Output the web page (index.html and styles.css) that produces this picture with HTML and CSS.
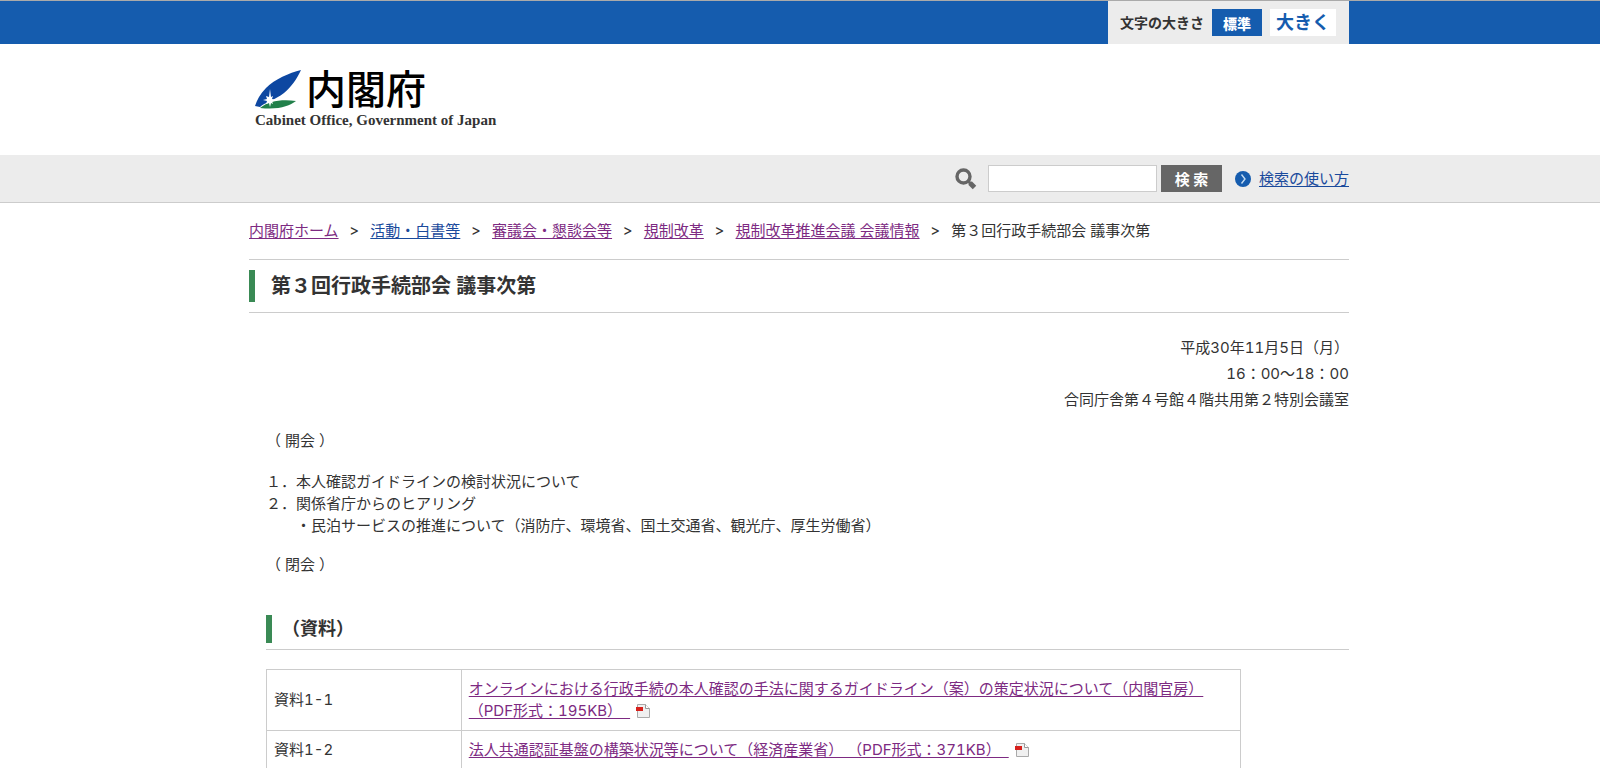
FILE: index.html
```
<!DOCTYPE html>
<html lang="ja">
<head>
<meta charset="utf-8">
<title>第３回行政手続部会 議事次第 - 内閣府</title>
<link rel="stylesheet" href="styles.css">
</head>
<body>
<div class="topbar">
  <div class="inner topbar-inner">
    <div class="fontsize">
      <span class="fontsize-label">文字の大きさ</span>
      <button type="button" class="size-btn size-standard">標準</button>
      <button type="button" class="size-btn size-large">大きく</button>
    </div>
  </div>
</div>

<header class="header">
  <div class="inner">
    <a class="logo" href="#">
      <span class="logo-main">
        <svg class="logo-mark" width="46" height="40" viewBox="0 0 46 40" aria-hidden="true">
          <path d="M46 0C34 3 20 9 11 18 5 24 2 30 0 36l5 1C9 33 20 30 29 23 36 17 42 9 46 0Z" fill="#0d47a1"/>
          <path d="M5 38C13 31 27 29 41 31 34 36 24 40 5 38Z" fill="#22804a"/>
          <path d="M15 19l1 8 2-1-1 3 5 1-5 1 1 3-2-1-1 4-1-4-3 1 1-3-4-1 4-1-1-3 3 1Z" fill="#fff"/>
        </svg>
        <span class="logo-ja">内閣府</span>
      </span>
      <span class="logo-en">Cabinet Office, Government of Japan</span>
    </a>
  </div>
</header>

<div class="searchbar">
  <form class="inner search">
    <label class="search-label" for="q" aria-label="検索">
      <svg width="22" height="22" viewBox="0 0 22 22" aria-hidden="true">
        <circle cx="8.500" cy="8.500" r="6.500" fill="none" stroke="#666" stroke-width="3.400"/>
        <path d="M13 13l2.500 2.500" stroke="#666" stroke-width="3"/>
        <path d="M15 15l4.500 4.500" stroke="#666" stroke-width="5"/>
      </svg>
    </label>
    <input class="search-input" id="q" type="text">
    <button class="search-btn" type="button">検 索</button>
    <svg class="search-arrow" width="16" height="16" viewBox="0 0 16 16" aria-hidden="true">
      <circle cx="8" cy="8" r="8" fill="#155cae"/>
      <path d="M6.500 3.500l3.500 4.500-3.500 4.500" fill="none" stroke="#c4dcf2" stroke-width="1.400"/>
    </svg>
    <a class="link-new" href="#">検索の使い方</a>
  </form>
</div>

<main class="inner">
  <nav class="crumbs" aria-label="パンくずリスト">
    <a href="#">内閣府ホーム</a><span>&gt;</span>
    <a class="link-new" href="#">活動・白書等</a><span>&gt;</span>
    <a href="#">審議会・懇談会等</a><span>&gt;</span>
    <a href="#">規制改革</a><span>&gt;</span>
    <a href="#">規制改革推進会議 会議情報</a><span>&gt;</span>
    <b>第３回行政手続部会 議事次第</b>
  </nav>

  <div class="title-box"><h1 class="title">第３回行政手続部会 議事次第</h1></div>

  <div class="meeting">
    <p>平成30年11月5日（月）</p>
    <p>16：00～18：00</p>
    <p>合同庁舎第４号館４階共用第２特別会議室</p>
  </div>

  <div class="body">
    <p class="session">（ 開会 ）</p>
    <div class="agenda">
      <p>１．本人確認ガイドラインの検討状況について</p>
      <p>２．関係省庁からのヒアリング</p>
      <p class="agenda-sub">・民泊サービスの推進について（消防庁、環境省、国土交通省、観光庁、厚生労働省）</p>
    </div>
    <p class="session">（ 閉会 ）</p>

    <div class="section-head"><h2 class="section-title">（資料）</h2></div>

    <table class="docs">
      <tr>
        <td class="docs-no">資料1-1</td>
        <td><a href="#">オンラインにおける行政手続の本人確認の手法に関するガイドライン（案）の策定状況について（内閣官房）<br>（PDF形式：195KB）&nbsp;&nbsp;</a>
          <svg class="pdf" width="14" height="14" viewBox="0 0 14 14" aria-hidden="true"><path d="M1.500.5h8l4 4v9h-12Z" fill="#f0f0f0" stroke="#aaa"/><path d="M9.500.5v4h4" fill="#fff" stroke="#999"/><path d="M0 3h7v4H0Z" fill="#d8201c"/></svg></td>
      </tr>
      <tr>
        <td class="docs-no">資料1-2</td>
        <td><a href="#">法人共通認証基盤の構築状況等について（経済産業省） （PDF形式：371KB）&nbsp;&nbsp;</a>
          <svg class="pdf" width="14" height="14" viewBox="0 0 14 14" aria-hidden="true"><path d="M1.500.5h8l4 4v9h-12Z" fill="#f0f0f0" stroke="#aaa"/><path d="M9.500.5v4h4" fill="#fff" stroke="#999"/><path d="M0 3h7v4H0Z" fill="#d8201c"/></svg></td>
      </tr>
    </table>
  </div>
</main>
</body>
</html>
```
FILE: styles.css
```
* { box-sizing: border-box; }
body {
  margin: 0;
  background: #fff;
  color: #333;
  font: 15px/22px Inter, "Noto Sans CJK JP", sans-serif;
  font-variant-numeric: tabular-nums;
}
p, h1, h2 { margin: 0; }
button, input { font-family: inherit; }
a {
  color: #7d2a82;
  text-decoration: underline;
  text-decoration-skip-ink: none;
  text-underline-offset: 2px;
}
.link-new { color: #1a4a9c; }
.inner { max-width: 1102px; margin: 0 auto; padding-right: 2px; }

.topbar { background: #155cae; border-top: 1px solid #aaa; }
.topbar-inner { display: flex; justify-content: flex-end; }
.fontsize {
  display: flex;
  align-items: center;
  gap: 8px;
  height: 43px;
  padding: 0 13px 0 12px;
  background: #ececec;
}
.fontsize-label { font-size: 14px; font-weight: 700; }
.size-btn { border: 0; padding: 0; height: 27px; font-weight: 700; }
.size-standard { width: 50px; background: #155cae; color: #fff; font-size: 14px; font-weight: 900; }
.size-large { width: 66px; background: #fff; color: #155cae; font-size: 18px; line-height: 24px; }

.header { padding: 24px 0 26px; }
.logo { display: inline-flex; flex-direction: column; padding-left: 6px; color: #111; text-decoration: none; }
.logo-main { display: flex; align-items: center; gap: 5px; height: 44px; }
.logo-ja { font-size: 40px; line-height: 48px; font-weight: 500; color: #000; }
.logo-en { font: bold 15px/17px "Liberation Serif", serif; color: #333; }

.searchbar { background: #ececec; border-bottom: 1px solid #ccc; }
.search { display: flex; align-items: center; justify-content: flex-end; height: 47px; }
.search-label { display: flex; margin-right: 11px; }
.search-input { width: 169px; height: 27px; border: 1px solid #ccc; background: #fff; margin-right: 4px; }
.search-btn { width: 61px; height: 27px; padding: 0; border: 0; background: #666; color: #fff; font-size: 15px; font-weight: 700; }
.search-arrow { margin: 0 8px 0 13px; }

.crumbs { display: flex; align-items: center; gap: 11px; padding: 17px 0; }
.crumbs b { font-weight: 400; }

.title-box { padding: 10px 0; border-top: 1px solid #ccc; border-bottom: 1px solid #ccc; }
.title { padding-left: 16px; border-left: 6px solid #3a8a55; font-size: 20px; line-height: 32px; }

.meeting { padding-top: 22px; line-height: 26px; text-align: right; }

.body { padding-left: 17px; }
.session { padding-top: 17px; }
.agenda { padding-top: 19px; }
.agenda-sub { padding-left: 30px; }
.agenda + .session { padding-top: 17px; }
.section-head { margin-top: 39px; padding-bottom: 6px; border-bottom: 1px solid #ccc; }
.section-title { padding-left: 10px; border-left: 6px solid #3a8a55; font-size: 18px; line-height: 28px; }

.docs { width: 90%; margin-top: 19px; border-collapse: collapse; }
.docs td { padding: 8px 7px; border: 1px solid #ccc; }
.docs .docs-no { width: 20%; }
.pdf { margin-left: 2px; vertical-align: -2px; }
```
